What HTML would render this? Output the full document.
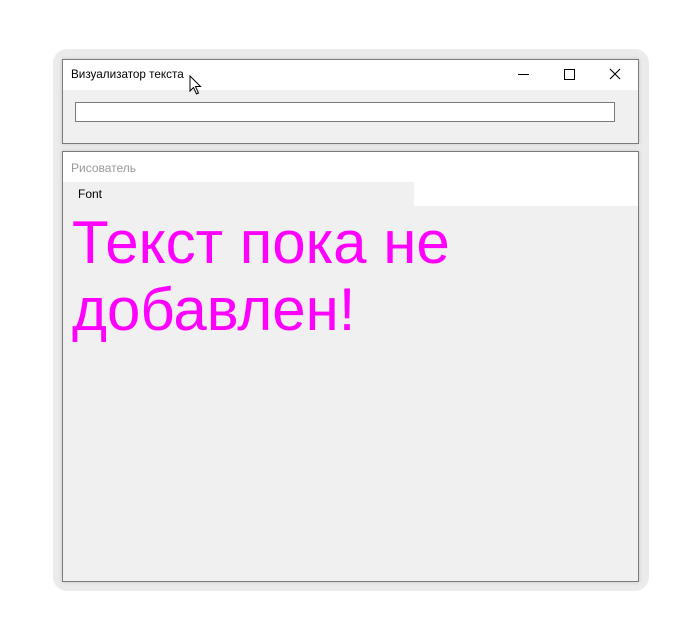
<!DOCTYPE html>
<html><head><meta charset="utf-8"><style>
body{margin:0;width:700px;height:640px;background:#fff;position:relative;overflow:hidden;font-family:"Liberation Sans","DejaVu Sans",sans-serif}
.halo{position:absolute;left:53px;top:49px;width:596px;height:542px;background:#ebebeb;border-radius:14px}
.w{position:absolute;left:62px;width:575px;border:1px solid #7a7a7a;background:#f0f0f0;box-shadow:0 0 4px rgba(0,0,0,.15)}
.t1{position:absolute;left:0;top:0;width:575px;height:30px;background:#fff}
.abs{position:absolute}
</style></head><body>
<div class="halo"></div>
<div class="w" style="top:59px;height:83px">
  <div class="t1"></div>
  <div class="abs" style="left:8px;top:8px;font-size:11.7px;color:#000">Визуализатор текста</div>
  <div class="abs" style="left:455px;top:14px;width:11px;height:1px;background:#000"></div>
  <div class="abs" style="left:501px;top:9px;width:9px;height:9px;border:1px solid #000"></div>
  <svg class="abs" style="left:546px;top:8px" width="12" height="12"><path d="M1 1L11 11M11 1L1 11" stroke="#000" stroke-width="1.1"/></svg>
  <div class="abs" style="left:12px;top:42px;width:538px;height:18px;border:1px solid #7a7a7a;background:#fff"></div>
</div>
<svg class="abs" style="left:189px;top:75px" width="16" height="22"><path d="M1 1L1 16L4.5 12.5L7.5 19L9.5 18L6.5 11.5L11.5 11.5Z" fill="#fff" stroke="#000" stroke-width="1"/></svg>
<div class="w" style="top:151px;height:429px">
  <div class="abs" style="left:0;top:0;width:575px;height:54px;background:#fff"></div>
  <div class="abs" style="left:8px;top:9px;font-size:12px;color:#999">Рисователь</div>
  <div class="abs" style="left:0;top:30px;width:351px;height:24px;background:#f0f0f0"></div>
  <div class="abs" style="left:15px;top:35px;font-size:12px;color:#000">Font</div>
  <div class="abs" style="left:9px;top:57px;font-size:60px;line-height:67px;color:#f0f">Текст пока не<br>добавлен!</div>
</div>
</body></html>
